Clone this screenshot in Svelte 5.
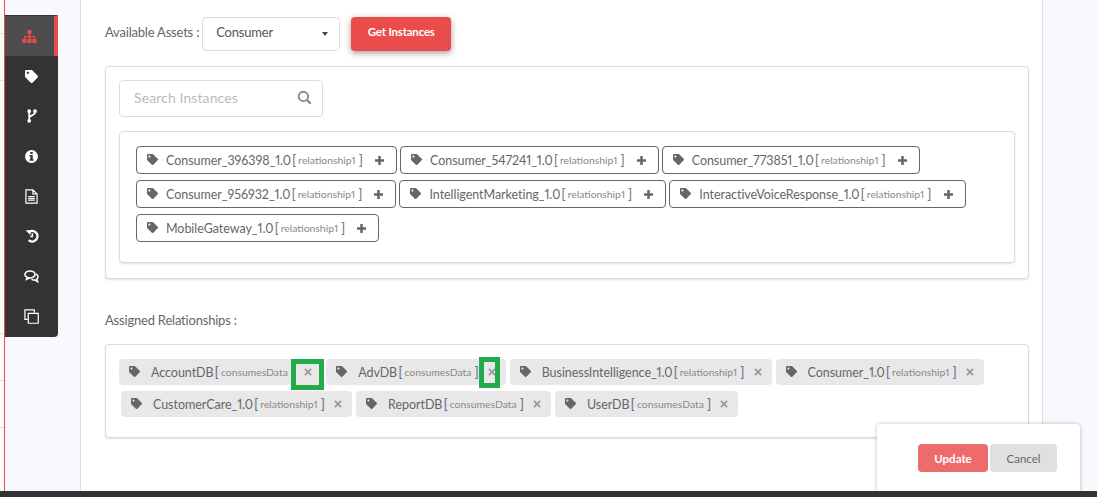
<script>
  const tagPath =
    "M0 252.118V48C0 21.49 21.49 0 48 0h204.118a48 48 0 0 1 33.941 14.059l211.882 211.882c18.745 18.745 18.745 49.137 0 67.882L293.823 497.941c-18.745 18.745-49.137 18.745-67.882 0L14.059 286.059A48 48 0 0 1 0 252.118zM112 64c-26.51 0-48 21.49-48 48s21.49 48 48 48 48-21.49 48-48-21.49-48-48-48z";

  const instances = [
    { name: "Consumer_396398_1.0", rel: "relationship1" },
    { name: "Consumer_547241_1.0", rel: "relationship1" },
    { name: "Consumer_773851_1.0", rel: "relationship1" },
    { name: "Consumer_956932_1.0", rel: "relationship1" },
    { name: "IntelligentMarketing_1.0", rel: "relationship1" },
    { name: "InteractiveVoiceResponse_1.0", rel: "relationship1" },
    { name: "MobileGateway_1.0", rel: "relationship1" },
  ];

  const assignedRows = [
    [
      { name: "AccountDB", rel: "consumesData" },
      { name: "AdvDB", rel: "consumesData" },
      { name: "BusinessIntelligence_1.0", rel: "relationship1" },
      { name: "Consumer_1.0", rel: "relationship1" },
    ],
    [
      { name: "CustomerCare_1.0", rel: "relationship1" },
      { name: "ReportDB", rel: "consumesData" },
      { name: "UserDB", rel: "consumesData" },
    ],
  ];
</script>

{#snippet tag()}
  <svg class="tag-icon" viewBox="0 0 512 512"><path d={tagPath} /></svg>
{/snippet}

{#snippet rel(text)}
  <span class="name-rel"><b>[</b><small>{text}</small><b>]</b></span>
{/snippet}

<div class="page">
  <div class="edge"></div>
  <div class="gutter"></div>
  <main>
    <div class="asset-row">
      <span class="label">Available Assets :</span>
      <div class="select">
        <span>Consumer</span>
        <i class="caret"></i>
      </div>
      <button class="get">Get Instances</button>
    </div>

    <section class="panel instances">
      <div class="search">
        <span>Search Instances</span>
        <svg viewBox="0 0 16 16" width="15" height="15">
          <circle cx="6.8" cy="6.8" r="5" fill="none" stroke="#888" stroke-width="2" />
          <path d="M10.6 10.6L14.6 14.6" stroke="#888" stroke-width="2.4" />
        </svg>
      </div>
      <div class="tag-box">
        {#each instances as item}
          <div class="tag">
            {@render tag()}
            <span class="name">{item.name}</span>
            {@render rel(item.rel)}
            <svg class="plus" viewBox="0 0 10 10"><path d="M3.6 0h2.8v3.6H10v2.8H6.4V10H3.6V6.4H0V3.6h3.6z" /></svg>
          </div>
        {/each}
      </div>
    </section>

    <div class="label assigned-label">Assigned Relationships :</div>

    <section class="panel assigned">
      {#each assignedRows as row, r}
        <div class="chip-row" class:second={r === 1}>
          {#each row as item}
            <div class="chip">
              {@render tag()}
              <span class="name">{item.name}</span>
              {@render rel(item.rel)}
              <svg class="cross" viewBox="0 0 10 10"><path d="M2 0.4L5 3.4 8 0.4 9.6 2 6.6 5l3 3L8 9.6l-3-3-3 3L0.4 8l3-3-3-3z" /></svg>
            </div>
          {/each}
        </div>
      {/each}
    </section>
  </main>
  <div class="gutter right"></div>

  <nav class="sidebar">
    <div class="nav-item active">
      <svg viewBox="0 0 16 14" width="15" height="13" fill="#ea4b4b">
        <path d="M5.8 0h4.4v4H8.7v2.4h5.2V9.6h1.6V14h-4.4V9.6h1.6V7.8H8.7v1.8h1.5V14H5.8V9.6h1.5V7.8H3.1v1.8h1.6V14H.3V9.6h1.6V6.4h5.4V4H5.8z" />
      </svg>
    </div>
    <div class="nav-item">
      <svg viewBox="0 0 512 512" width="13" height="13" fill="#fff"><path d={tagPath} /></svg>
    </div>
    <div class="nav-item">
      <svg viewBox="0 0 10 14" width="10" height="14" fill="none" stroke="#fff" stroke-width="1.8">
        <circle cx="2.2" cy="2.2" r="1" />
        <circle cx="2.2" cy="11.8" r="1" />
        <circle cx="8" cy="2.2" r="1" />
        <path d="M2.2 3.2v7.6M8 3.2c0 3.4-5.8 2.8-5.8 5.8" />
      </svg>
    </div>
    <div class="nav-item">
      <svg viewBox="0 0 16 16" width="13" height="13">
        <circle cx="8" cy="8" r="8" fill="#fff" />
        <path d="M6.5 2.4h3v2.4h-3zM5.6 6.2h3.9v5.2h1v1.9H5.6v-1.9h1V8.1h-1z" fill="#333" />
      </svg>
    </div>
    <div class="nav-item">
      <svg viewBox="0 0 14 16" width="13" height="15" fill="none" stroke="#fff" stroke-width="1.3">
        <path d="M1 0.8h7.5L13 5.2v10H1zM8.5 0.8v4.4H13" />
        <path d="M3.4 8h7.2M3.4 10h7.2M3.4 12h7.2" />
      </svg>
    </div>
    <div class="nav-item">
      <svg viewBox="0 0 16 16" width="14" height="14" fill="none" stroke="#fff" stroke-width="2.8">
        <path d="M3.8 4.2A6 6 0 1 1 4.2 12.8" />
        <path d="M8.4 4.8v3.8H6" stroke-width="1.7" />
        <path d="M0.6 1.4h5.6v5.4z" fill="#fff" stroke="none" />
      </svg>
    </div>
    <div class="nav-item">
      <svg viewBox="0 0 16 14" width="15" height="13" fill="none" stroke="#fff" stroke-width="1.7">
        <ellipse cx="6.4" cy="4.8" rx="5.4" ry="3.8" />
        <path d="M3.4 8L2.6 10 6 8.6" />
        <path d="M12.6 4.2c1.6.8 2.6 2 2.4 3.4-.2 1-.7 1.6-1.3 2.1l.8 2.8-3-1.8c-1.2.2-2.6 0-3.4-.8" />
      </svg>
    </div>
    <div class="nav-item">
      <svg viewBox="0 0 16 16" width="15" height="15" fill="none" stroke="#fff" stroke-width="1.3">
        <path d="M11 4V1H1v10h3" />
        <path d="M4.6 4.6h10.6v10.6H4.6z" />
      </svg>
    </div>
  </nav>

  <div class="mark first"></div>
  <div class="mark second"></div>

  <div class="actions">
    <button class="update">Update</button>
    <button class="cancel">Cancel</button>
  </div>

  <div class="bottom"></div>
</div>

<style>
  :global(body) {
    margin: 0;
    overflow: hidden;
  }
  .page {
    position: relative;
    display: flex;
    width: 1097px;
    height: 497px;
    overflow: hidden;
    background: #f8f9ff;
    font-family: Lato, sans-serif;
    color: #666;
  }
  .edge {
    width: 4px;
    border-right: 1px solid #ea4b4b;
    background:
      linear-gradient(#ddd, #ddd) 0 33px / 100% 1px no-repeat,
      linear-gradient(#ddd, #ddd) 0 80px / 100% 1px no-repeat,
      linear-gradient(#ddd, #ddd) 0 333px / 100% 1px no-repeat,
      linear-gradient(#ddd, #ddd) 0 380px / 100% 1px no-repeat,
      linear-gradient(#ddd, #ddd) 0 427px / 100% 1px no-repeat,
      #fafafa;
  }
  .gutter {
    width: 75px;
    border-right: 1px solid #ddd;
  }
  .gutter.right {
    flex: 1;
    border-right: 0;
    border-left: 1px solid #ddd;
  }
  main {
    width: 961px;
    box-sizing: border-box;
    padding: 17px 13px 0 24px;
    background: #fff;
  }
  .asset-row {
    display: flex;
    align-items: flex-start;
    height: 34px;
  }
  .label {
    font-size: 13px;
    letter-spacing: -0.2px;
    line-height: 30px;
    color: #666;
  }
  .select {
    display: flex;
    align-items: center;
    justify-content: space-between;
    box-sizing: border-box;
    width: 138px;
    height: 34px;
    margin-left: 3px;
    padding: 0 11px 4px 13px;
    border: 1px solid #ddd;
    border-radius: 4px;
    font-size: 13px;
    letter-spacing: -0.2px;
    color: #555;
  }
  .caret {
    width: 0;
    height: 0;
    margin-top: 4px;
    border: 3.5px solid transparent;
    border-top: 4px solid #444;
    border-bottom: 0;
  }
  .get {
    width: 100px;
    height: 34px;
    margin-left: 11px;
    padding: 0 0 5px;
    border: 0;
    border-radius: 4px;
    background: #ea4b4b;
    box-shadow: 0 2px 6px rgba(0, 0, 0, 0.4);
    color: #fff;
    font: bold 11.5px Lato, sans-serif;
    letter-spacing: -0.2px;
  }
  .panel {
    box-sizing: border-box;
    border: 1px solid #ddd;
    border-radius: 4px;
    box-shadow: 0 1px 2px rgba(0, 0, 0, 0.12);
    background: #fff;
  }
  .instances {
    height: 213px;
    margin-top: 15px;
    padding: 13px;
  }
  .search {
    display: flex;
    align-items: center;
    justify-content: space-between;
    box-sizing: border-box;
    width: 204px;
    height: 37px;
    padding: 0 10px 2px 14px;
    border: 1px solid #ddd;
    border-radius: 4px;
    font-size: 14px;
    letter-spacing: 0.1px;
    color: #bbb;
  }
  .tag-box {
    display: flex;
    flex-wrap: wrap;
    align-content: flex-start;
    box-sizing: border-box;
    height: 132px;
    margin-top: 14px;
    padding: 14px 16px;
    border: 1px solid #ddd;
    border-radius: 4px;
    box-shadow: 0 1px 2px rgba(0, 0, 0, 0.12);
    gap: 6px 3px;
  }
  .tag,
  .chip {
    display: inline-flex;
    align-items: center;
    box-sizing: border-box;
    white-space: nowrap;
    font-size: 12.5px;
    font-variant-numeric: proportional-nums;
    letter-spacing: -0.05px;
    border-radius: 4px;
  }
  .tag {
    height: 28px;
    padding: 0 12px 0 10px;
    border: 1px solid #666;
  }
  .tag-icon {
    flex: none;
    width: 11px;
    height: 11px;
    margin-top: -2px;
    margin-right: 8px;
    fill: #666;
  }
  .name {
    color: #666;
    margin-right: 1px;
  }
  .name-rel {
    display: inline-flex;
    align-items: center;
    letter-spacing: 0;
  }
  .name-rel b {
    font-weight: 400;
    font-size: 14px;
    line-height: 1;
    color: #777;
  }
  .chip .name-rel b {
    color: #5f7094;
  }
  .name-rel small {
    margin: 0 3px 0 2px;
    font-size: 10.4px;
    color: #888;
  }
  .plus {
    flex: none;
    width: 9px;
    height: 9px;
    margin-left: 12px;
    fill: #666;
  }
  .assigned-label {
    margin-top: 26px;
  }
  .assigned {
    height: 94px;
    margin-top: 9px;
    padding: 14px 13px;
  }
  .chip-row {
    display: flex;
    gap: 4px;
  }
  .chip-row.second {
    margin-top: 6px;
    margin-left: 2px;
  }
  .chip {
    height: 26px;
    padding: 0 10px;
    background: #e8e8e8;
  }
  .chip .tag-icon {
    margin-right: 11px;
  }
  .cross {
    flex: none;
    width: 8px;
    height: 8px;
    margin-left: 9px;
    fill: #999;
  }
  .sidebar {
    position: absolute;
    top: 15px;
    left: 5px;
    width: 53px;
    height: 322px;
    background: #333;
    border-radius: 0 0 4px 0;
  }
  .nav-item {
    display: flex;
    align-items: center;
    justify-content: center;
    height: 40px;
  }
  .nav-item.active {
    box-sizing: border-box;
    height: 41px;
    background: #4d4d4d;
    border-right: 4px solid #ea4b4b;
    border-top: 1px solid #333;
    padding-top: 1px;
  }
  .mark {
    position: absolute;
    box-sizing: border-box;
    border: 5px solid #22ab4b;
  }
  .mark.first {
    left: 291px;
    top: 359px;
    width: 33px;
    height: 31px;
  }
  .mark.second {
    left: 479px;
    top: 357px;
    width: 21px;
    height: 31px;
  }
  .actions {
    position: absolute;
    left: 877px;
    top: 424px;
    display: flex;
    gap: 2px;
    box-sizing: border-box;
    width: 203px;
    height: 70px;
    padding: 20px 0 0 41px;
    background: #fff;
    border-radius: 4px;
    box-shadow: 0 0 4px rgba(0, 0, 0, 0.25);
  }
  .actions button {
    height: 28px;
    border: 0;
    border-radius: 4px;
    font: 11.5px Lato, sans-serif;
  }
  .actions .update {
    width: 70px;
    background: #ee6b6b;
    color: #fff;
    font-weight: bold;
  }
  .cancel {
    width: 67px;
    background: #e0e0e0;
    color: #666;
  }
  .bottom {
    position: absolute;
    left: 0;
    right: 0;
    bottom: 0;
    height: 6px;
    background: #333;
  }
</style>
